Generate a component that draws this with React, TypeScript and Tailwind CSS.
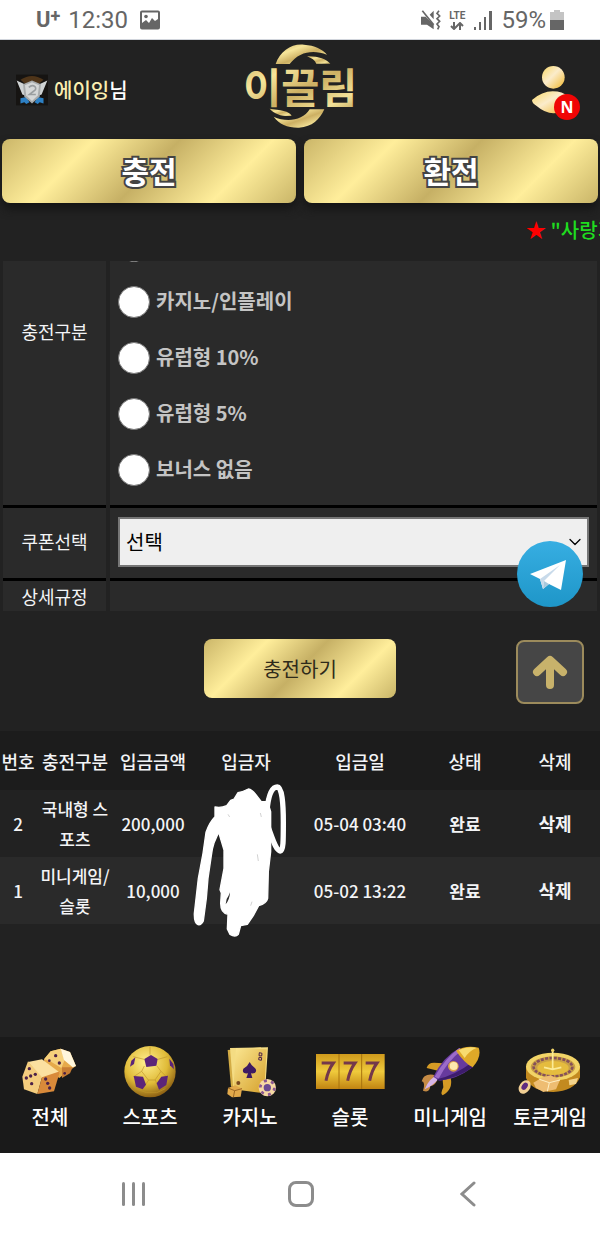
import { ChevronDown } from "lucide-react";
import { useState } from "react";
import type { ReactNode } from "react";

const bonusOptions = ["미니게임/슬롯", "카지노/인플레이", "유럽형 10%", "유럽형 5%", "보너스 없음"];

const deposits = [
  { no: 2, kind: "국내형 스포츠", amount: "200,000", date: "05-04 03:40", status: "완료" },
  { no: 1, kind: "미니게임/슬롯", amount: "10,000", date: "05-02 13:22", status: "완료" },
];

const goldButton =
  "bg-[linear-gradient(135deg,#cbb669_0%,#ffee9b_26%,#c6b065_50%,#ffee9b_76%,#c9b568_100%)]";

const titleButton =
  "h-16 rounded-lg pb-0.5 shadow-[0_6px_10px_#151515] [-webkit-text-stroke:4px_#444] [paint-order:stroke_fill]";

function StatusBar() {
  return (
    <div className="flex h-10 items-center justify-between border-b border-gray-300 bg-white px-9 font-[Roboto,sans-serif] text-2xl text-[#666]">
      <div className="flex items-center gap-2">
        <span className="flex items-start text-[22px] font-bold leading-6">
          U<sup className="top-0 text-lg leading-4">+</sup>
        </span>
        <span>12:30</span>
        <svg className="ml-1 h-5 w-5" viewBox="0 0 20 20" role="img" aria-label="사진">
          <rect x="1" y="1.5" width="18" height="17" rx="1" fill="none" stroke="#666" strokeWidth="2" />
          <circle cx="6" cy="6.5" r="1.8" fill="#666" />
          <path d="M2 13l4-3 3 3 3-5 3 3 3-2v9H2z" fill="#666" />
        </svg>
      </div>
      <div className="flex items-center gap-2">
        <svg className="h-5 w-5" viewBox="0 0 60 60" aria-hidden="true">
          <path d="M0 20h14l24 24v14L18 44H0zM26 14L38 2v26z" fill="#666" />
          <path d="M4 2l34 42" stroke="#666" strokeWidth="5" />
          <path d="M54 2l-6 8 8 8-8 8 8 8-8 8 6 8-4 8" fill="none" stroke="#666" strokeWidth="5" />
        </svg>
        <span className="flex flex-col items-center">
          <span className="text-[10px] font-bold leading-3">LTE</span>
          <svg className="h-2 w-4" viewBox="0 0 16 8" aria-hidden="true">
            <path d="M5 0v7M2 4l3 3 3-3M11 8V1M8 4l3-3 3 3" fill="none" stroke="#666" strokeWidth="2" />
          </svg>
        </span>
        <svg className="h-5 w-5" viewBox="0 0 20 20" fill="#666" aria-hidden="true">
          <rect x="1" y="17" width="2" height="3" />
          <rect x="6" y="12" width="2" height="8" />
          <rect x="11" y="7" width="2" height="13" />
          <rect x="16" y="1" width="3" height="19" />
        </svg>
        <span className="flex items-center gap-1">
          59%
          <svg className="h-5 w-3.5" viewBox="0 0 14 20" aria-hidden="true">
            <path d="M4 0h6v2h4v9H0V2h4z" fill="#c4c4c4" />
            <path d="M0 10h14v10H0z" fill="#666" />
          </svg>
        </span>
      </div>
    </div>
  );
}

function RankBadge() {
  return (
    <svg className="h-8 w-8" viewBox="0 0 100 96" aria-hidden="true">
      <rect width="100" height="96" fill="#161412" />
      <path d="M14 16Q50-8 86 16L70 30H30z" fill="#4f3519" />
      <path d="M14 74l18-4 10 16-10 6-6-6-12 4zM86 74l-18-4-10 16 10 6 6-6 12 4z" fill="#2d80c4" />
      <path d="M2 18l30 14 6 36-18-6zM98 18L68 32l-6 36 18-6z" fill="#cfd3d4" />
      <path d="M22 30L50 18l28 12-4 38-24 22-24-22z" fill="#a9acad" />
      <path d="M28 33L50 24l22 9-4 32-18 17-18-17z" fill="#d5d7d7" />
      <path d="M40 40q10-10 20-2 5 8-5 14L42 62h20" fill="none" stroke="#9a9ea0" strokeWidth="5" />
    </svg>
  );
}

function Logo() {
  return (
    <svg className="h-[93px] w-[130px]" viewBox="0 6 390 279" role="img" aria-label="이끌림">
      <defs>
        <linearGradient id="logoGold" x1="0" y1="0" x2="1" y2="1">
          <stop offset="0" stopColor="#c9ab5c" />
          <stop offset="0.3" stopColor="#f6e59a" />
          <stop offset="0.55" stopColor="#cdb063" />
          <stop offset="0.8" stopColor="#f3e298" />
          <stop offset="1" stopColor="#b39850" />
        </linearGradient>
      </defs>
      <g fill="url(#logoGold)">
        <path d="M122 78C136 38 170 16 207 20c32 2 56 14 69 30-40-16-84-10-112 28z" />
        <path d="M216 55c34-1 56 8 70 22h-42c-4-10-14-17-28-22z" />
        <path d="M104 212c30 4 60 6 66 22-26 2-52-5-66-22z" />
        <path d="M116 236c38 18 88 12 108-22h44c-14 30-36 53-76 55-32 1-60-10-76-33z" />
        <text
          x="196"
          y="195"
          textAnchor="middle"
          fontSize="124"
          fontWeight="700"
          fontFamily="'Noto Sans CJK KR', sans-serif"
          stroke="#222"
          strokeWidth="6"
          paintOrder="stroke"
        >
          이끌림
        </text>
      </g>
    </svg>
  );
}

function Header() {
  return (
    <header className="grid h-[99px] grid-cols-[1fr_auto_1fr] items-start">
      <a href="#profile" className="mt-8 flex items-center gap-1.5 pl-4 text-xl font-medium leading-9 text-white">
        <RankBadge />
        <span>
          <span className="text-[#fbeeb0]">에이잉</span>님
        </span>
      </a>
      <a href="#home">
        <Logo />
      </a>
      <button type="button" aria-label="내 정보" className="relative mr-8 mt-6 justify-self-end">
        <svg className="h-[50px] w-9" viewBox="0 0 108 150" aria-hidden="true">
          <defs>
            <linearGradient id="personGold" x1="0" y1="0" x2="1" y2="1">
              <stop offset="0" stopColor="#f8d765" />
              <stop offset="0.45" stopColor="#fbeccb" />
              <stop offset="1" stopColor="#f0b72b" />
            </linearGradient>
          </defs>
          <circle cx="64" cy="40" r="34" fill="url(#personGold)" />
          <path d="M0 108Q30 82 62 82q30 0 46 16v34Q60 166 14 126Q0 118 0 108z" fill="url(#personGold)" />
        </svg>
        <span className="absolute -bottom-1.5 -right-3 flex h-[26px] w-[26px] items-center justify-center rounded-full bg-[#f00505] font-['Noto_Sans',sans-serif] text-base font-bold text-white">
          N
        </span>
      </button>
    </header>
  );
}

function FormRow({ label, children }: { label: ReactNode; children?: ReactNode }) {
  return (
    <div className="group flex gap-1">
      <div className="flex w-[103px] shrink-0 items-center justify-center border-b-3 border-black bg-[#2a2a2a] text-lg leading-7 text-gray-100 group-last:border-b-0">
        {label}
      </div>
      <div className="min-w-0 flex-1 border-b-3 border-black bg-[#2a2a2a] px-2 group-last:border-b-0">{children}</div>
    </div>
  );
}

function DepositForm() {
  const [bonus, setBonus] = useState("");

  return (
    <form className="relative" onSubmit={(event) => event.preventDefault()}>
      <div className="flex h-[350px] flex-col justify-end overflow-hidden px-[3px]">
        <FormRow label={<span className="pb-1.5">충전구분</span>}>
          <div role="radiogroup" aria-label="충전구분" className="pb-[7px] pt-14">
            {bonusOptions.map((option) => (
              <label key={option} className="flex h-14 items-center gap-1.5 text-xl font-bold text-[#c4c4c4]">
                <input
                  type="radio"
                  name="bonus"
                  value={option}
                  checked={bonus === option}
                  onChange={() => setBonus(option)}
                  className="h-8 w-8 appearance-none rounded-full border border-[#767676] bg-white checked:border-8 checked:border-[#c6b065]"
                />
                <span className="pb-0.5">{option}</span>
              </label>
            ))}
          </div>
        </FormRow>
        <FormRow label={<label htmlFor="coupon" className="pb-1">쿠폰선택</label>}>
          <div className="relative pb-[11px] pt-[9px]">
            <select
              id="coupon"
              className="h-[50px] w-full appearance-none border-2 border-[#767676] bg-[#efefef] px-1.5 text-xl text-black"
            >
              <option>선택</option>
            </select>
            <ChevronDown
              aria-hidden="true"
              strokeWidth={1.5}
              className="pointer-events-none absolute right-1 top-6 h-5 w-5 text-black"
            />
          </div>
        </FormRow>
        <FormRow label={<span className="py-px">상세규정</span>} />
      </div>

      <div className="flex h-[120px] items-start justify-center pt-7">
        <button type="submit" className={`h-[59px] w-48 rounded-lg text-xl text-[#2e2a1a] ${goldButton}`}>
          충전하기
        </button>
      </div>

      <a href="#telegram" aria-label="텔레그램" className="absolute right-4 top-[279px]">
        <svg className="h-[68px] w-[68px]" viewBox="0 0 68 68" aria-hidden="true">
          <defs>
            <linearGradient id="telegramBlue" x1="0" y1="0" x2="0" y2="1">
              <stop offset="0" stopColor="#37aee2" />
              <stop offset="1" stopColor="#1e96c8" />
            </linearGradient>
          </defs>
          <circle cx="34" cy="34" r="33" fill="url(#telegramBlue)" />
          <path d="M14 34L50 20 45 50 33 44 27 49 24 39z" fill="#fff" />
          <path d="M24 39L44 25 28 41 27 49z" fill="#c8daea" />
          <path d="M28 41l5 3-6 5z" fill="#a9c9dd" />
        </svg>
      </a>
      <button
        type="button"
        aria-label="맨 위로"
        onClick={() => window.scrollTo({ top: 0 })}
        className="absolute right-4 top-[379px] flex h-16 w-[68px] items-center justify-center rounded-lg border-2 border-[#9c8b5c] bg-[#464646]"
      >
        <svg className="h-9 w-9" viewBox="0 0 36 36" aria-hidden="true">
          <path
            d="M18 31V7M5 18L18 6l13 12"
            fill="none"
            stroke="#c8b26b"
            strokeWidth="8"
            strokeLinecap="round"
            strokeLinejoin="round"
          />
        </svg>
      </button>
    </form>
  );
}

function DepositTable() {
  return (
    <section className="relative">
      <table className="w-full table-fixed text-center text-[17px] font-medium leading-[30px] text-gray-100">
        <colgroup>
          <col className="w-[6%]" />
          <col className="w-[13%]" />
          <col className="w-[13%]" />
          <col className="w-[18%]" />
          <col className="w-[20%]" />
          <col className="w-[15%]" />
          <col className="w-[15%]" />
        </colgroup>
        <thead className="bg-[#1c1c1c] text-lg">
          <tr className="h-[59px] whitespace-nowrap">
            <th className="font-medium">번호</th>
            <th className="font-medium">충전구분</th>
            <th className="font-medium">입금금액</th>
            <th className="font-medium">입금자</th>
            <th className="font-medium">입금일</th>
            <th className="font-medium">상태</th>
            <th className="font-medium">삭제</th>
          </tr>
        </thead>
        <tbody>
          {deposits.map((item) => (
            <tr key={item.no} className="h-[67px] even:bg-[#2a2a2a]">
              <td>{item.no}</td>
              <td className="break-all px-1">{item.kind}</td>
              <td>{item.amount}</td>
              <td />
              <td>{item.date}</td>
              <td className="font-bold">{item.status}</td>
              <td>
                <button type="button" className="text-lg font-bold">
                  삭제
                </button>
              </td>
            </tr>
          ))}
        </tbody>
      </table>
      {/* hand-drawn mask over the depositor names */}
      <svg className="absolute left-[32%] top-[53px] h-[154px] w-24" viewBox="576 177 288 462" aria-hidden="true">
        <path
          d="M645 246Q662 250 680 242L692 226 702 222 714 203Q730 200 745 192 756 194 766 207L784 230 803 230 812 260V380L805 440 803 520Q800 535 776 542L760 572 742 598 722 602 715 628Q706 638 690 628L682 612 684 568Q662 565 662 535L664 504 660 494 672 430V375L656 322 642 354Q636 372 634 392L624 460 619 520 610 588Q604 601 594 599 582 594 583 565L595 460 609 385 618 322Q628 292 645 275z"
          fill="#fff"
          stroke="#fff"
          strokeWidth="4"
          strokeLinejoin="round"
        />
        <path
          d="M801 256C806 204 818 186 832 186c14 0 18 50 18 106 0 56 0 86-9 86-14-2-22-34-38-76"
          fill="none"
          stroke="#fff"
          strokeWidth="16"
        />
        <path d="M690 502q-4 12-10 20l-3 16q12-14 13-36z" fill="#2a2a2a" />
        <path d="M684 268l5 8M781 264l3 12M772 388l3 20M756 530l-4 12" stroke="#bbb" strokeWidth="2" />
      </svg>
    </section>
  );
}

function DiceIcon() {
  return (
    <svg className="h-[54px] w-[70px]" viewBox="45 45 210 162" aria-hidden="true">
      <path d="M132 88l20-24 30-8 28 10 18 42-32 22-18 14-44-30z" fill="#e6a94a" />
      <path d="M132 88l20-24 30-8 12 34-10 24-36-22z" fill="#f6d07c" />
      <path d="M182 56l28 10 18 42-10 4-26-22z" fill="#fff6dc" />
      <path d="M186 112l32 0-8 18-24 14z" fill="#c87d34" />
      <path d="M84 96l42-8 54 40-56 16z" fill="#fbe0a0" />
      <path d="M84 94l42 48-14 50-40-14-5-38z" fill="#f4cd7e" />
      <path d="M126 142l54-18-18 60-50 8z" fill="#d98a3a" />
      <g fill="#4b2048">
        <circle cx="88" cy="116" r="5" />
        <circle cx="79" cy="144" r="5" />
        <circle cx="92" cy="138" r="5" />
        <circle cx="106" cy="133" r="5" />
        <circle cx="95" cy="161" r="5" />
        <circle cx="137" cy="147" r="5" />
        <circle cx="143" cy="160" r="5" />
        <circle cx="149" cy="174" r="5" />
        <circle cx="167" cy="77" r="5" />
        <circle cx="148" cy="92" r="4" />
        <circle cx="178" cy="99" r="5" />
        <circle cx="194" cy="130" r="4" />
      </g>
    </svg>
  );
}

function BallIcon() {
  return (
    <svg className="h-[54px] w-[70px]" viewBox="345 45 210 162" aria-hidden="true">
      <defs>
        <radialGradient id="ballGold" cx="0.42" cy="0.32" r="0.7">
          <stop offset="0" stopColor="#ffef8f" />
          <stop offset="0.6" stopColor="#e0bb38" />
          <stop offset="1" stopColor="#8a5d12" />
        </radialGradient>
      </defs>
      <circle cx="450" cy="125" r="77" fill="url(#ballGold)" />
      <path
        d="M450 48v26M433 108l-8 16 20 26h20l18-26-12-16M400 80l32 8M474 88l28-8M425 124l-24 16M483 124l14 14M436 165l10-15M466 150l6 16M412 178l28 10h30l26-12"
        fill="none"
        stroke="#c0962a"
        strokeWidth="2"
      />
      <g fill="#5b2479">
        <path d="M453 75l20 12-4 20-30 4-6-24z" />
        <path d="M401 138l28 2 9 24-10 14-20-8z" />
        <path d="M470 160l14-20 20-3-5 28-22 14z" />
        <path d="M406 82l-4 20-12 8 4-18z" />
        <path d="M508 86l12 16 2 16-12-12z" />
      </g>
    </svg>
  );
}

function CardsIcon() {
  return (
    <svg className="h-[54px] w-[70px]" viewBox="645 45 210 162" aria-hidden="true">
      <defs>
        <linearGradient id="cardGold" x1="0" y1="0" x2="1" y2="1">
          <stop offset="0" stopColor="#fbe793" />
          <stop offset="1" stopColor="#d5a02a" />
        </linearGradient>
      </defs>
      <path d="M683 60l100-8 8 110-98 8z" fill="#d3ac45" />
      <path d="M690 54l114-2-8 120-96 6z" fill="#f4dc83" />
      <path d="M708 54l92 4-8 132-92-12z" fill="url(#cardGold)" />
      <path d="M749 96q4 10 18 20 6 16-14 14l4 14h-18l5-14q-20 2-14-14 14-8 19-20z" fill="#3e1b62" />
      <path d="M778 68l8 2-1 8-8-1zM777 82l8 1-1 8-8-2z" fill="none" stroke="#4b2048" strokeWidth="3" />
      <circle cx="715" cy="159" r="6" fill="#7a4a20" />
      <path d="M684 174l22-8 20 10-4 24-26 2-14-10z" fill="#e2a94b" />
      <path d="M684 174l20 8 22-6M704 182l-4 20" stroke="#9c6724" strokeWidth="3" fill="none" />
      <circle cx="802" cy="173" r="26" fill="#f6d9a4" />
      <circle cx="802" cy="173" r="21" fill="none" stroke="#8a5790" strokeWidth="8" strokeDasharray="9 13" />
      <circle cx="802" cy="173" r="11" fill="#6a4a92" />
    </svg>
  );
}

function SlotIcon() {
  return (
    <svg className="h-[54px] w-[70px]" viewBox="45 45 210 162" aria-hidden="true">
      <defs>
        <linearGradient id="reelGold" x1="0" y1="0" x2="0" y2="1">
          <stop offset="0" stopColor="#cf9a1c" />
          <stop offset="0.5" stopColor="#efca3c" />
          <stop offset="1" stopColor="#c18412" />
        </linearGradient>
      </defs>
      <path d="M48 72h206v105H48z" fill="url(#reelGold)" />
      <path d="M117 72v105M185 72v105" stroke="#a8730f" strokeWidth="3" />
      <path
        d="M65 99h35q-16 22-22 53M131 99h34q-16 22-22 53M197 99h34q-16 22-22 53"
        fill="none"
        stroke="#74384a"
        strokeWidth="9"
      />
    </svg>
  );
}

function RocketIcon() {
  return (
    <svg className="h-[54px] w-[70px]" viewBox="345 45 210 162" aria-hidden="true">
      <path d="M380 114q4-16 22-16l28 2-10 24z" fill="#d59b25" />
      <path d="M428 150l24-6q8 34-24 52-8-4 2-24z" fill="#d59b25" />
      <path d="M400 134q-30-4-35 20 12 2 4 28 20 8 22-14 16 0 22-24z" fill="#c58b45" />
      <path d="M412 136q-24 8-38 42 24-10 44-34z" fill="#d5b5e8" />
      <path d="M400 140q28-58 78-86 28 18 40 58-50 38-100 40z" fill="#673a9e" />
      <path d="M404 140q30-54 74-86l8 6q-44 34-70 86z" fill="#9b6bc9" />
      <path d="M418 152q56-8 100-40l-4-14q-46 36-104 50z" fill="#3d1c6c" />
      <path d="M468 62q30-18 68-9 10 26-18 59-26-14-50-50z" fill="#dfa928" />
      <path d="M476 60q28-12 54-6-22 8-36 30z" fill="#f8dc70" />
      <circle cx="460" cy="109" r="16" fill="#d9a04a" />
      <circle cx="461" cy="108" r="12" fill="#ffe9ae" />
    </svg>
  );
}

function RouletteIcon() {
  return (
    <svg className="h-[54px] w-[70px]" viewBox="645 45 210 162" aria-hidden="true">
      <path d="M678 108q80 20 162 0v34q-18 42-80 44-66-2-82-42z" fill="#c38a20" />
      <ellipse cx="759" cy="110" rx="81" ry="42" fill="#f2d467" />
      <ellipse cx="759" cy="111" rx="67" ry="32" fill="#c9a046" />
      <ellipse
        cx="759"
        cy="111"
        rx="58"
        ry="27"
        fill="none"
        stroke="#85505a"
        strokeWidth="8"
        strokeDasharray="9 4"
      />
      <ellipse cx="759" cy="114" rx="47" ry="21" fill="#e5bc3e" />
      <path d="M758 56v62M732 112l26 6 26-6" fill="none" stroke="#fbea96" strokeWidth="5" />
      <circle cx="758" cy="61" r="5" fill="#f2d467" />
      <path d="M700 158l28-16 24-6 28 14-12 28-38 8-22-12z" fill="#eebd72" />
      <path d="M718 148l30 10 32-8M748 158l-6 26" stroke="#fff0c4" strokeWidth="3" fill="none" />
      <ellipse cx="674" cy="171" rx="16" ry="22" transform="rotate(35 674 171)" fill="#f1cf94" />
      <ellipse cx="674" cy="169" rx="8" ry="12" transform="rotate(35 674 169)" fill="#5d2a80" />
      <path d="M806 150l28-6-6 18-20 4z" fill="#f3d48c" />
    </svg>
  );
}

const menu = [
  { label: "전체", icon: <DiceIcon /> },
  { label: "스포츠", icon: <BallIcon /> },
  { label: "카지노", icon: <CardsIcon /> },
  { label: "슬롯", icon: <SlotIcon /> },
  { label: "미니게임", icon: <RocketIcon /> },
  { label: "토큰게임", icon: <RouletteIcon /> },
];

function SystemNav() {
  return (
    <div className="grid h-20 grid-cols-3 items-center justify-items-center bg-white pl-[50px] pr-12 pt-0.5 text-[#8c8c8c]">
      <button type="button" aria-label="최근 앱" className="flex gap-[7px]">
        <span className="h-6 w-[3px] rounded-full bg-[#8c8c8c]" />
        <span className="h-6 w-[3px] rounded-full bg-[#8c8c8c]" />
        <span className="h-6 w-[3px] rounded-full bg-[#8c8c8c]" />
      </button>
      <button type="button" aria-label="홈" className="h-[26px] w-[26px] rounded-lg border-3 border-[#8c8c8c]" />
      <button type="button" aria-label="뒤로">
        <svg className="h-[26px] w-4" viewBox="0 0 16 26" aria-hidden="true">
          <path d="M14 2L2 13l12 11" fill="none" stroke="#8c8c8c" strokeWidth="3" strokeLinecap="round" />
        </svg>
      </button>
    </div>
  );
}

export default function App() {
  return (
    <div className="flex min-h-screen flex-col bg-[#222] font-['Noto_Sans_CJK_KR',sans-serif]">
      <StatusBar />
      <Header />
      <div className="grid grid-cols-2 gap-2 px-0.5 text-3xl font-bold text-white">
        <button type="button" className={`${titleButton} ${goldButton}`}>
          충전
        </button>
        <button type="button" className={`${titleButton} ${goldButton}`}>
          환전
        </button>
      </div>
      <div className="flex h-[58px] items-center justify-end pb-1">
        <p className="w-[74px] overflow-hidden whitespace-nowrap text-xl font-medium text-[#1fdc1f]">
          <span className="text-[#f00]">★</span> "사랑가득"
        </p>
      </div>
      <main className="flex-1">
        <DepositForm />
        <DepositTable />
      </main>
      <nav className="grid h-[116px] grid-cols-6 bg-[#1a1a1a] pt-2">
        {menu.map((item) => (
          <a
            key={item.label}
            href="#menu"
            className="flex flex-col items-center whitespace-nowrap text-xl font-medium leading-9 text-white"
          >
            {item.icon}
            {item.label}
          </a>
        ))}
      </nav>
      <SystemNav />
    </div>
  );
}
